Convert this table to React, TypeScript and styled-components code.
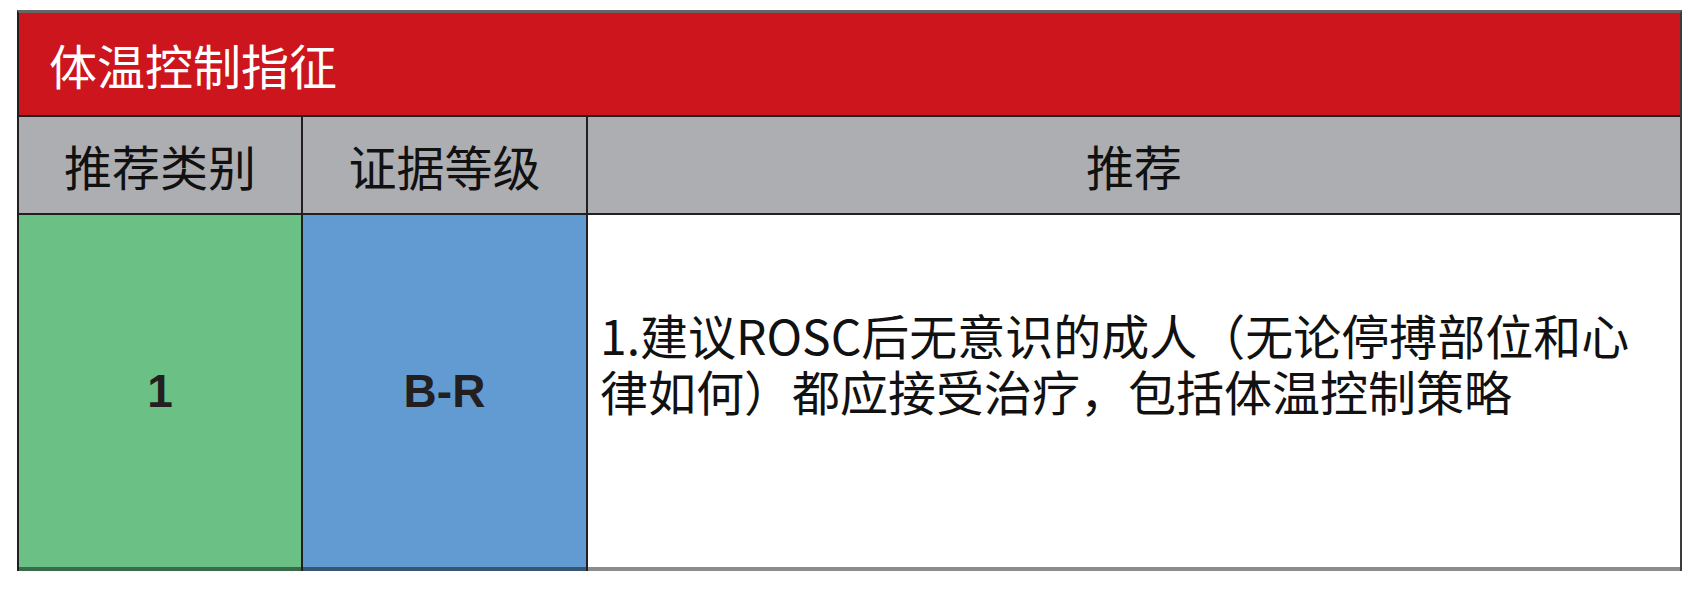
import React from 'react';
import styled, { createGlobalStyle } from 'styled-components';

const colors = {
  red: '#cc151d',
  grey: '#adaeb1',
  green: '#6bc185',
  blue: '#629bd2',
  line: '#231f20',
  ink: '#111111',
};

const cjk = '"Noto Sans CJK SC", "Noto Sans", sans-serif';

const GlobalStyle = createGlobalStyle`
  html, body {
    margin: 0;
    padding: 0;
    background: #ffffff;
  }
  body {
    font-family: ${cjk};
  }
`;

const Page = styled.div`
  padding: 10px 0 0 17px;
`;

const Table = styled.div`
  display: grid;
  grid-template-columns: 282px 283px 1092px;
  grid-template-rows: 102px 96px 356px;
  gap: 2px;
  width: 1661px;
  background-color: ${colors.line};
  border-top: 3px solid #666666;
  border-left: 2px solid ${colors.line};
  border-right: 2px solid #3c3c3c;
`;

const TitleCell = styled.div`
  grid-column: 1 / -1;
  display: flex;
  align-items: center;
  padding-left: 30px;
  background-color: ${colors.red};
  color: #ffffff;
  font-size: 48px;
`;

const HeadCell = styled.div`
  display: flex;
  align-items: center;
  justify-content: center;
  background-color: ${colors.grey};
  color: ${colors.ink};
  font-size: 48px;
`;

const BodyCell = styled.div<{ $bg: string }>`
  display: flex;
  align-items: center;
  justify-content: center;
  background-color: ${(p) => p.$bg};
  border-bottom: 4px solid rgba(0, 0, 0, 0.45);
`;

const Grade = styled.span`
  font-family: "Liberation Sans", Arial, sans-serif;
  font-weight: 700;
  font-size: 46px;
  color: ${colors.line};
`;

const TextCell = styled(BodyCell)`
  justify-content: flex-start;
  padding: 0 30px 58px 12px;
`;

const Recommendation = styled.p`
  margin: 0;
  font-size: 48px;
  line-height: 56px;
  color: ${colors.ink};
`;

export default function App() {
  return (
    <Page>
      <GlobalStyle />
      <Table>
        <TitleCell>体温控制指征</TitleCell>
        <HeadCell>推荐类别</HeadCell>
        <HeadCell>证据等级</HeadCell>
        <HeadCell>推荐</HeadCell>
        <BodyCell $bg={colors.green}>
          <Grade>1</Grade>
        </BodyCell>
        <BodyCell $bg={colors.blue}>
          <Grade>B-R</Grade>
        </BodyCell>
        <TextCell $bg="#ffffff">
          <Recommendation>
            1.建议ROSC后无意识的成人（无论停搏部位和心律如何）都应接受治疗，包括体温控制策略
          </Recommendation>
        </TextCell>
      </Table>
    </Page>
  );
}
